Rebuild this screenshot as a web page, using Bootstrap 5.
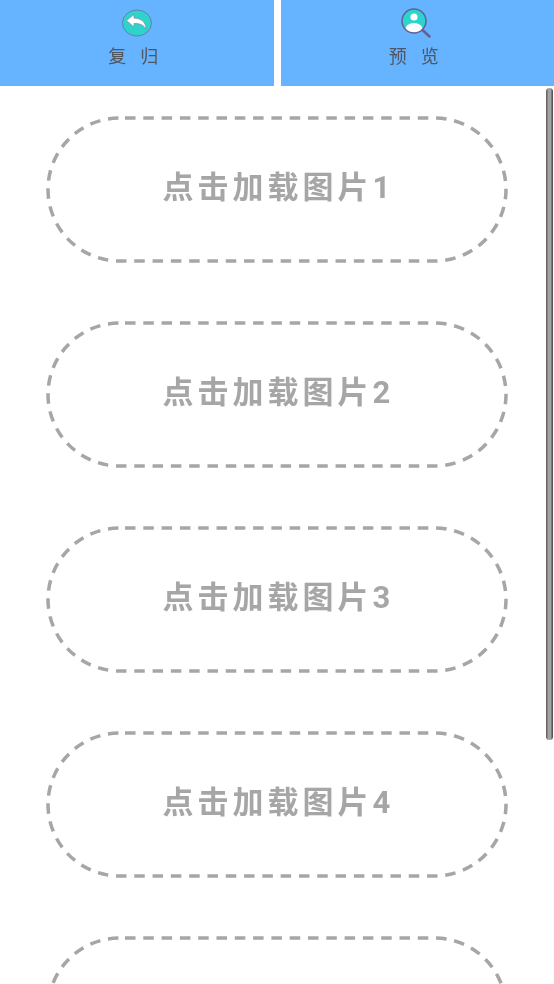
<!doctype html>
<html lang="zh"><head><meta charset="utf-8">
<link href="https://cdn.jsdelivr.net/npm/bootstrap@5.3.0/dist/css/bootstrap.min.css" rel="stylesheet">
<style>
html,body{height:100%;overflow:hidden;background:#fff}
body{font-family:Roboto,"Noto Sans CJK SC",sans-serif}
.app-root{height:984px}
.top-bar{height:86px;gap:7px}
.top-btn{background:#66b3ff;color:#505560;font-size:18px;line-height:22px;padding-top:8px;font-weight:400}
.icon-reply{display:block;width:32px;height:30px}
.btn-label{letter-spacing:14px;margin-right:-7px;margin-top:8px;filter:blur(.3px)}
.scroll-zone{height:898px;overflow:hidden;padding:30px 46px 0 46px}
.pill{position:relative;height:147px;width:462px;margin-bottom:58px;color:#a6a6a6;font-size:31px;font-weight:700;letter-spacing:4px;flex:none;padding-bottom:3px;padding-left:3px}
.pill svg{position:absolute;inset:0;width:462px;height:147px}
.pill span{position:relative;filter:blur(.4px)}
.fake-thumb{position:absolute;right:1px;top:88px;width:7px;height:652px;border-radius:4px;background:linear-gradient(90deg,#666 0,#666 14%,#a3a3a3 30%,#a3a3a3 70%,#555 86%,#555 100%)}
</style></head><body>
<div class="app-root position-relative d-flex flex-column">
<div class="top-bar d-flex">
<div class="top-btn flex-fill d-flex flex-column align-items-center">
<svg class="icon-reply" viewBox="0 0 32 30"><ellipse cx="16" cy="15" rx="14.500" ry="13" fill="#2ed3cb" stroke="#6a7fa8" stroke-width="1"/><path d="M5.500 12.500 13 6.500v3.600c6 .2 12 3 12 11.200-2.400-4.600-6.600-6-12-5.800v3.500z" fill="#fff" stroke="#7d86ad" stroke-width=".7"/></svg>
<span class="btn-label">复归</span></div>
<div class="top-btn flex-fill d-flex flex-column align-items-center">
<svg class="icon-reply" viewBox="0 0 32 30"><defs><clipPath id="lens"><circle cx="13" cy="13" r="12"/></clipPath></defs><circle cx="13" cy="13" r="12" fill="#2ed3cb"/><g clip-path="url(#lens)"><circle cx="13" cy="9" r="3.600" fill="#fff"/><ellipse cx="13" cy="22" rx="9" ry="7" fill="#fff"/></g><circle cx="13" cy="13" r="12" fill="none" stroke="#5f6299" stroke-width="1.500"/><path d="M21.500 22l7 6.500" stroke="#5f6299" stroke-width="2.500" stroke-linecap="round"/></svg>
<span class="btn-label">预览</span></div>
</div>
<div class="scroll-zone">
<div class="pill d-flex align-items-center justify-content-center"><svg viewBox="0 0 462 147"><rect x="2" y="2" width="458" height="143" rx="71.500" fill="none" stroke="#a6a6a6" stroke-width="3.500" stroke-dasharray="10.500 7.800" stroke-dashoffset="-5.500"/></svg><span>点击加载图片1</span></div>
<div class="pill d-flex align-items-center justify-content-center"><svg viewBox="0 0 462 147"><rect x="2" y="2" width="458" height="143" rx="71.500" fill="none" stroke="#a6a6a6" stroke-width="3.500" stroke-dasharray="10.500 7.800" stroke-dashoffset="-5.500"/></svg><span>点击加载图片2</span></div>
<div class="pill d-flex align-items-center justify-content-center"><svg viewBox="0 0 462 147"><rect x="2" y="2" width="458" height="143" rx="71.500" fill="none" stroke="#a6a6a6" stroke-width="3.500" stroke-dasharray="10.500 7.800" stroke-dashoffset="-5.500"/></svg><span>点击加载图片3</span></div>
<div class="pill d-flex align-items-center justify-content-center"><svg viewBox="0 0 462 147"><rect x="2" y="2" width="458" height="143" rx="71.500" fill="none" stroke="#a6a6a6" stroke-width="3.500" stroke-dasharray="10.500 7.800" stroke-dashoffset="-5.500"/></svg><span>点击加载图片4</span></div>
<div class="pill d-flex align-items-center justify-content-center"><svg viewBox="0 0 462 147"><rect x="2" y="2" width="458" height="143" rx="71.500" fill="none" stroke="#a6a6a6" stroke-width="3.500" stroke-dasharray="10.500 7.800" stroke-dashoffset="-5.500"/></svg></div>
</div>
<div class="fake-thumb"></div>
</div>
<script src="https://cdn.jsdelivr.net/npm/bootstrap@5.3.0/dist/js/bootstrap.bundle.min.js"></script>
</body></html>
